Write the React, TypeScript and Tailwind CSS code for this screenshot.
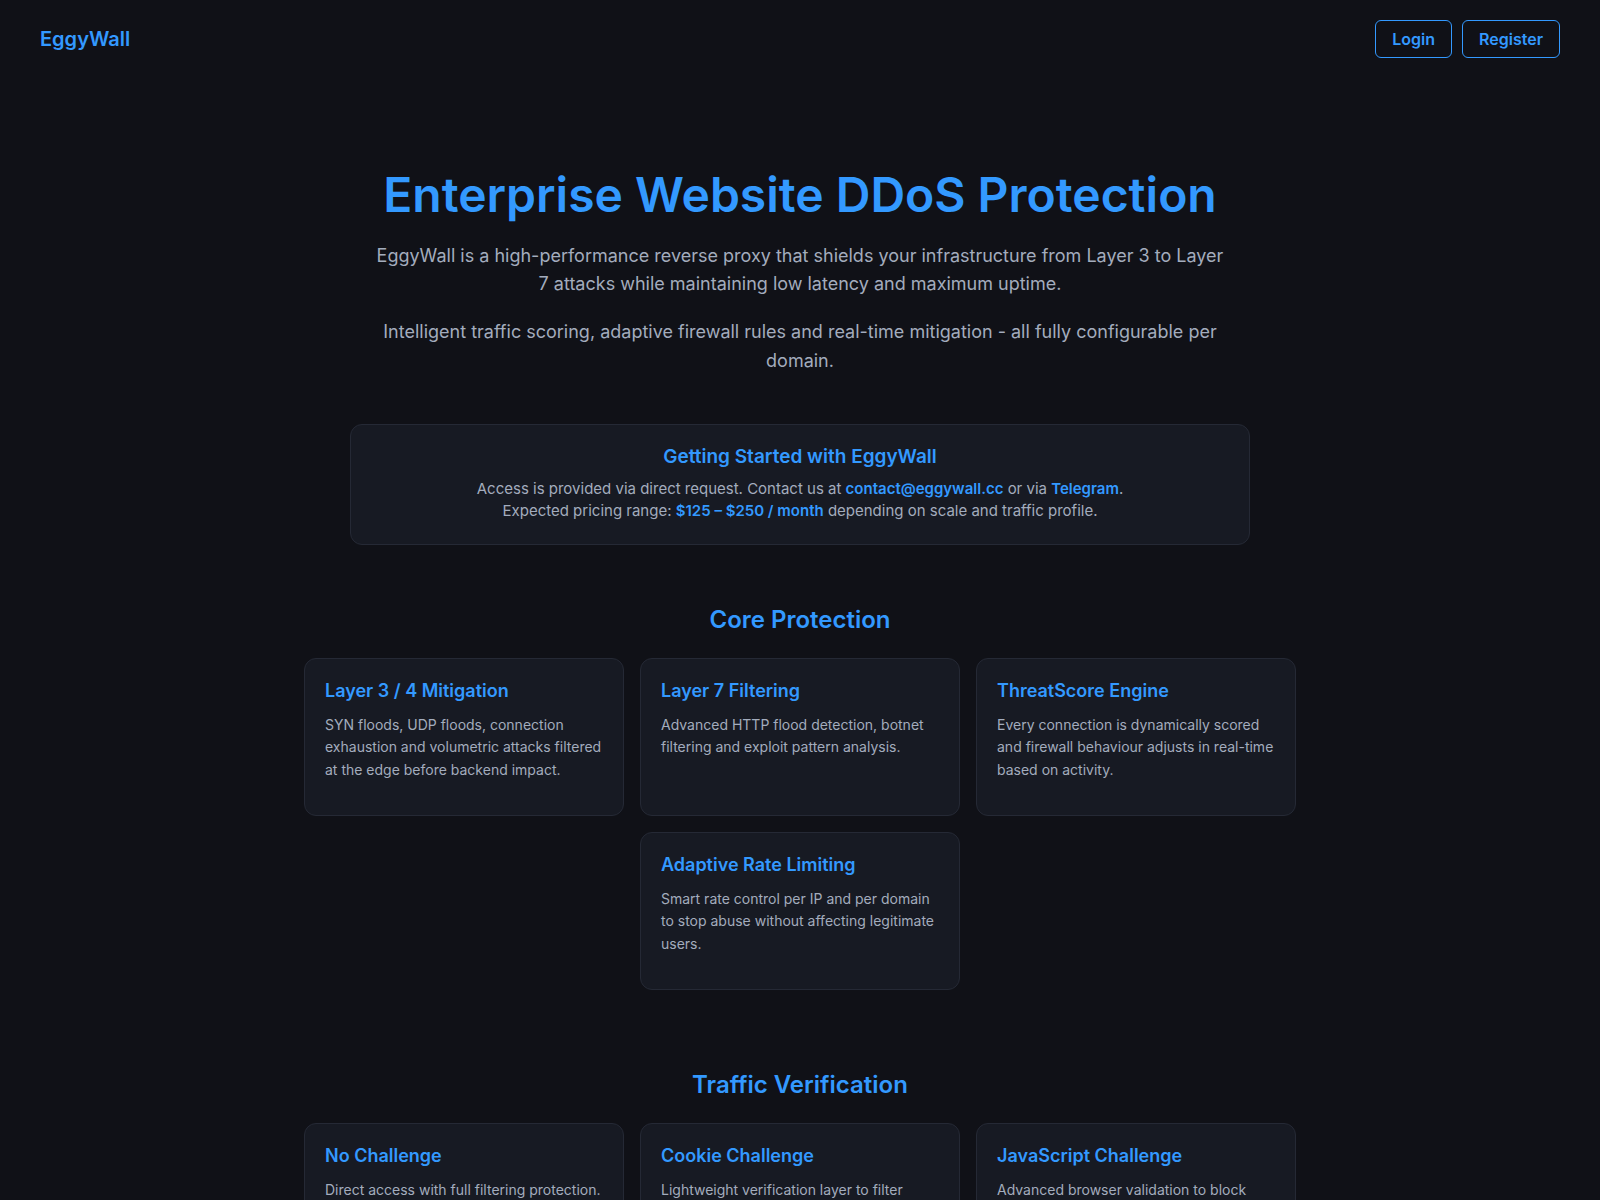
import React from 'react';

const core = [
  {
    title: 'Layer 3 / 4 Mitigation',
    text: 'SYN floods, UDP floods, connection exhaustion and volumetric attacks filtered at the edge before backend impact.',
  },
  {
    title: 'Layer 7 Filtering',
    text: 'Advanced HTTP flood detection, botnet filtering and exploit pattern analysis.',
  },
  {
    title: 'ThreatScore Engine',
    text: 'Every connection is dynamically scored and firewall behaviour adjusts in real-time based on activity.',
  },
  {
    title: 'Adaptive Rate Limiting',
    text: 'Smart rate control per IP and per domain to stop abuse without affecting legitimate users.',
  },
];

const verification = [
  {
    title: 'No Challenge',
    text: 'Direct access with full filtering protection.',
  },
  {
    title: 'Cookie Challenge',
    text: 'Lightweight verification layer to filter basic automated traffic.',
  },
  {
    title: 'JavaScript Challenge',
    text: 'Advanced browser validation to block headless clients and scripted bots.',
  },
];

function Card({ title, text }: { title: string; text: string }) {
  return (
    <div className="w-[320px] min-h-[158px] rounded-xl border border-[#252935] bg-[#171a23] px-5 pt-[19px] pb-5">
      <h3 className="mb-[11px] text-[18px] font-semibold leading-[1.4] text-[#3399ff]">{title}</h3>
      <p className="text-[14px] leading-[1.6] text-[#a3acbd]">{text}</p>
    </div>
  );
}

function Section({ title, items, className }: { title: string; items: { title: string; text: string }[]; className: string }) {
  return (
    <section className={className}>
      <h2 className="mb-[22px] text-center text-[24px] font-semibold leading-8 text-[#3399ff]">{title}</h2>
      <div className="mx-auto flex w-[992px] flex-wrap justify-center gap-4">
        {items.map((item) => (
          <Card key={item.title} {...item} />
        ))}
      </div>
    </section>
  );
}

export default function App() {
  return (
    <div className="min-h-screen bg-[#101117] font-['Inter','Noto_Sans',sans-serif] pb-20">
      <header className="flex items-center justify-between px-10 py-5">
        <span className="text-[20px] font-semibold text-[#3399ff]">EggyWall</span>
        <nav className="flex gap-2.5">
          <button className="rounded-md border border-[#3399ff] px-4 py-[6px] text-[16px] font-semibold leading-6 text-[#3399ff]">
            Login
          </button>
          <button className="rounded-md border border-[#3399ff] px-4 py-[6px] text-[16px] font-semibold leading-6 text-[#3399ff]">
            Register
          </button>
        </nav>
      </header>

      <main>
        <section className="mx-auto mt-[88px] flex max-w-[900px] flex-col items-center text-center">
          <h1 className="text-[48px] font-semibold leading-[1.2] text-[#3399ff]">Enterprise Website DDoS Protection</h1>
          <p className="mt-[18px] max-w-[850px] text-[18px] leading-[1.6] text-[#a3acbd]">
            EggyWall is a high-performance reverse proxy that shields your infrastructure from Layer 3 to Layer 7
            attacks while maintaining low latency and maximum uptime.
          </p>
          <p className="mt-[19px] max-w-[850px] text-[18px] leading-[1.6] text-[#a3acbd]">
            Intelligent traffic scoring, adaptive firewall rules and real-time mitigation - all fully configurable per
            domain.
          </p>
        </section>

        <div className="mx-auto mt-[48px] w-[900px] rounded-xl border border-[#252935] bg-[#171a23] px-6 pb-[21px] pt-5 text-center">
          <h3 className="text-[19px] font-semibold leading-6 text-[#3399ff]">Getting Started with EggyWall</h3>
          <p className="mt-[9px] text-[15px] leading-[1.5] text-[#a3acbd]">
            Access is provided via direct request. Contact us at{' '}
            <span className="font-semibold text-[#3399ff]">contact@eggywall.cc</span> or via{' '}
            <span className="font-semibold text-[#3399ff]">Telegram</span>.
            <br />
            Expected pricing range: <span className="font-semibold text-[#3399ff]">$125 – $250 / month</span>{' '}
            depending on scale and traffic profile.
          </p>
        </div>

        <Section title="Core Protection" items={core} className="mt-[59px]" />
        <Section title="Traffic Verification" items={verification} className="mt-[79px]" />
      </main>
    </div>
  );
}
